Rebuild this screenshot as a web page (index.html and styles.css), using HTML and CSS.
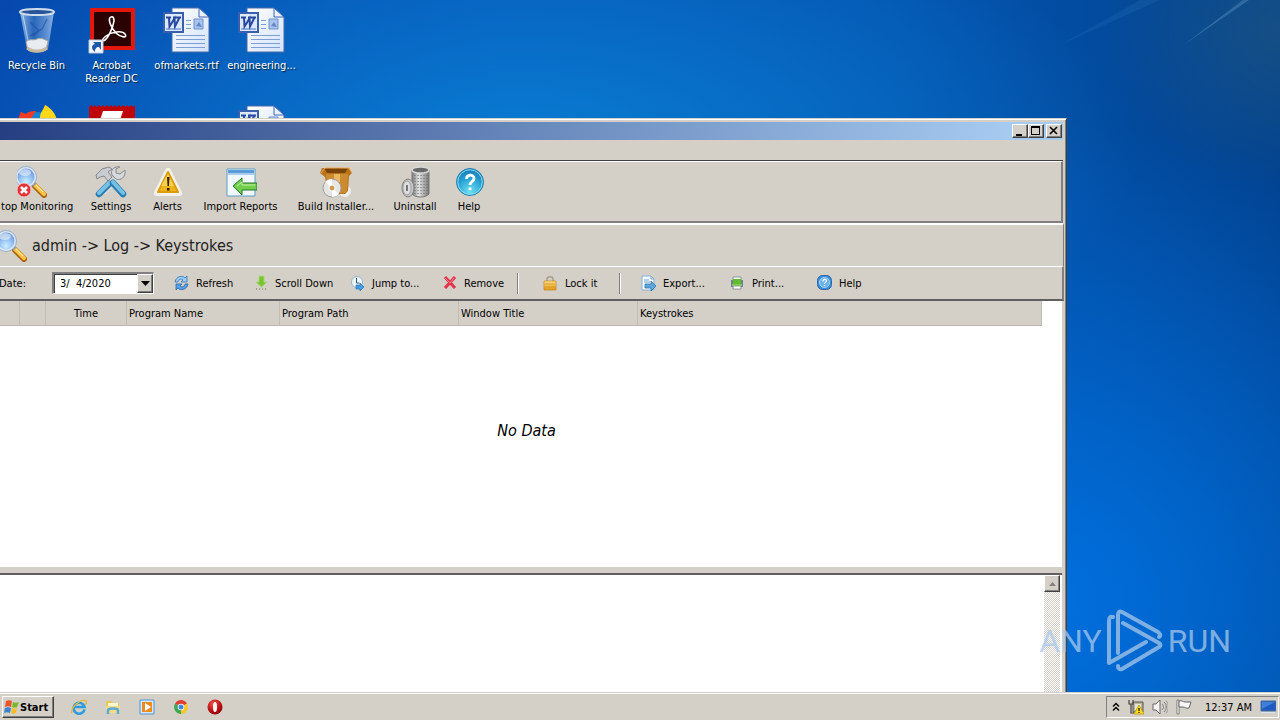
FILE: index.html
```html
<!DOCTYPE html>
<html lang="en">
<head>
<meta charset="utf-8">
<title>Desktop</title>
<link rel="stylesheet" href="styles.css">
</head>
<body>
<svg class="defs" aria-hidden="true">
  <defs>
    <linearGradient id="paper" x1="0" y1="0" x2="1" y2="1"><stop offset="0" stop-color="#fff"/><stop offset="1" stop-color="#d3e2fa"/></linearGradient>
    <linearGradient id="gold" x1="0" y1="0" x2="0" y2="1"><stop offset="0" stop-color="#ffe08a"/><stop offset="1" stop-color="#e29a12"/></linearGradient>
    <radialGradient id="lens" cx=".5" cy=".75" r=".8"><stop offset="0" stop-color="#c9f1ff"/><stop offset=".5" stop-color="#8db9ef"/><stop offset="1" stop-color="#5a86d0"/></radialGradient>
    <radialGradient id="aqua" cx=".5" cy=".85" r=".85"><stop offset="0" stop-color="#6fe0f6"/><stop offset=".6" stop-color="#259fd2"/><stop offset="1" stop-color="#1878b4"/></radialGradient>
    <linearGradient id="steel" x1="0" y1="0" x2="1" y2="0"><stop offset="0" stop-color="#777"/><stop offset=".4" stop-color="#e4e4e4"/><stop offset="1" stop-color="#777"/></linearGradient>
    <linearGradient id="glass" x1="0" y1="0" x2="1" y2="0"><stop offset="0" stop-color="#b9d4ef" stop-opacity=".8"/><stop offset=".4" stop-color="#4e83c4" stop-opacity=".5"/><stop offset="1" stop-color="#a9c8ec" stop-opacity=".8"/></linearGradient>
    <radialGradient id="opera" cx=".4" cy=".3" r=".8"><stop offset="0" stop-color="#f4554d"/><stop offset=".6" stop-color="#b80f12"/><stop offset="1" stop-color="#7d0507"/></radialGradient>
    <symbol id="word" viewBox="0 0 48 48">
      <path d="M9 2h27l10 9v35H9z" fill="url(#paper)" stroke="#4a6aa8"/>
      <path d="M36 2l10 9H36z" fill="#eaf2ff" stroke="#3c66b4"/>
      <path d="M13 29.500h29M13 33.500h29M13 37.500h29M13 41.500h29M23 14.500h5M23 18.500h5M23 22.500h5" stroke="#7f9fd4"/>
      <path d="M31 13h9v10h-9z" fill="#a8c3ee" stroke="#6f93cc"/>
      <path d="M33 20l3-4 3 5z" fill="#6387c4"/>
      <path d="M1 7h19v19H1z" fill="#dce8fb" stroke="#3a5fae" stroke-width="2"/>
      <path d="M3 23h15" stroke="#93afe0" stroke-width="2"/>
      <path d="M3 11.500h5M10 11.500h8M6 12l.5 8.500 5-8 .5 8 4.500-9" fill="none" stroke="#2648a0" stroke-width="2"/>
    </symbol>
    <symbol id="magnifier" viewBox="0 0 32 32">
      <path d="M20 20l9 9" stroke="#a8600a" stroke-width="6" stroke-linecap="round"/>
      <path d="M20 19l9 9" stroke="#ffc445" stroke-width="4" stroke-linecap="round"/>
      <path d="M21 19l7 7" stroke="#fff0b8" stroke-width="1"/>
      <path d="M17 16l3 3" stroke="#999" stroke-width="4"/>
      <circle cx="11" cy="11" r="9.5" fill="url(#lens)" stroke="#dbe7f7" stroke-width="2"/>
      <circle cx="11" cy="11" r="10.5" fill="none" stroke="#7e9cc4" stroke-width=".7"/>
      <ellipse cx="10" cy="6.5" rx="6" ry="3.5" fill="#fff" opacity=".5"/>
    </symbol>
  </defs>
</svg>

<div class="screen">
<main class="desktop">
  <svg class="rays" viewBox="0 0 1280 692" preserveAspectRatio="none" aria-hidden="true">
    <path d="M1160 0L1060 45 1140 0z" fill="#5aa4e0" opacity=".1"/>
    <path d="M1249 0L1182 46 1243 0z" fill="#8fc0ea" opacity=".25"/>
  </svg>
  <ul class="icons">
    <li><svg viewBox="0 0 48 48"><path d="M7 6l7 37c3 4 17 4 21 0l6-37z" fill="url(#glass)"/><ellipse cx="24" cy="6" rx="17" ry="3" fill="#28549b" stroke="#cfdce9" stroke-width="2"/><path d="M13 36c4-4 7-1 11-3s8 1 11 2l-2 9c-5 3-14 3-18 0z" fill="#e9edf2" stroke="#a9a59c"/><path d="M14 42c6 4 14 4 20 0" stroke="#c7b9a2" stroke-width="3" fill="none"/><path d="M17 16l9 9-6 5M34 13l-5 10-12 7" stroke="#1e4fa5" stroke-width="1.500" fill="none" opacity=".6"/><path d="M10 9l6 31" stroke="#dcecff" opacity=".7"/></svg><span>Recycle Bin</span></li>
    <li><svg viewBox="0 0 48 48"><path d="M2 2h45v42H2z" fill="#e3170a"/><path d="M6 6h37v34H6z" fill="#2b0204"/><path d="M23 11c-4 1 0 11 5 16s12 5 9 1-14-2-19 2-4 6-1 4 8-12 9-19c0-3-1-5-3-4z" fill="none" stroke="#fff" stroke-width="1.600"/><path d="M1 34h14v13H1z" fill="#f4f7fb" stroke="#bcc7d6"/><path d="M7 46c-4-3-4-7 0-8l-2-2h8v8l-2-3c-3 0-4 2-4 5z" fill="#1c5aa8"/></svg><span>Acrobat Reader DC</span></li>
    <li><svg><use href="#word"/></svg><span>ofmarkets.rtf</span></li>
    <li><svg><use href="#word"/></svg><span>engineering...</span></li>
    <li><svg viewBox="0 0 48 48"><circle cx="24" cy="26" r="18" fill="#1483d8"/><path d="M6 26c-2-8 0-15 2-18l5 2c3-3 7-3 10-3l-8 12z" fill="#ef3b23"/><path d="M27 14c0-6 3-7 5-13 6 3 12 10 12 17H28z" fill="#ffd81b"/></svg></li>
    <li><svg viewBox="0 0 48 48"><path d="M1 3l2-2 2 2 2-2 2 2 2-2 2 2 2-2 2 2 2-2 2 2 2-2 2 2 2-2 2 2 2-2 2 2 2-2 2 2 2-2 2 2 2-2 2 2 2-2v46H1z" fill="#c00509"/><path d="M15 7h20l-3 9H12z" fill="#fff"/></svg></li>
    <li></li>
    <li><svg><use href="#word"/></svg></li>
  </ul>

  <section class="window">
    <header class="titlebar">
      <button class="cap" aria-label="Minimize"><svg viewBox="0 0 14 12"><path d="M3 9h6v2H3z"/></svg></button>
      <button class="cap" aria-label="Maximize"><svg viewBox="0 0 14 12"><path d="M2 1h9v9H2zM3 3v6h7V3z" fill-rule="evenodd"/></svg></button>
      <button class="cap cap-close" aria-label="Close"><svg viewBox="0 0 14 12"><path d="M3 2l7 7M10 2L3 9" stroke="#000" stroke-width="1.600"/></svg></button>
    </header>
    <div class="menubar"></div>

    <nav class="toolbar">
      <button><svg viewBox="0 0 32 32"><g transform="translate(-2 0)"><use href="#magnifier" width="32" height="32"/><circle cx="9" cy="24" r="7" fill="#e23437" stroke="#f5c5c5"/><path d="M6 21l6 6M12 21l-6 6" stroke="#fff" stroke-width="2.600"/></g></svg><span>top Monitoring</span></button>
      <button><svg viewBox="0 0 32 32"><path d="M24 12L9 27" stroke="#d9d9d9" stroke-width="5"/><path d="M30 4l-5 4-4-1 0-4 4-2c-6-1-10 3-8 8l4 4c5 2 10-2 9-9z" fill="#d7dadd" stroke="#85888c"/><path d="M2 13l-1-4 6-6 7-2 3 2-4 3 4 5-4 4-4-5-4 1z" fill="#c9ccd0" stroke="#85888c"/><path d="M14 18L4 28" stroke="#287cae" stroke-width="6.500" stroke-linecap="round"/><path d="M14 17L4 27" stroke="#77c0e8" stroke-width="4" stroke-linecap="round"/><path d="M18 17l10 11" stroke="#287cae" stroke-width="6.500" stroke-linecap="round"/><path d="M18 16l10 11" stroke="#77c0e8" stroke-width="4" stroke-linecap="round"/></svg><span>Settings</span></button>
      <button><svg viewBox="0 0 32 32"><path d="M16 5l11 22H5z" fill="#f5f2ea" stroke="#f5f2ea" stroke-width="6" stroke-linejoin="round"/><path d="M16 6l10 20H6z" fill="#f0b41c" stroke="#dc9b0c" stroke-width="2" stroke-linejoin="round"/><path d="M16 8l6 12H9z" fill="#fbd24e"/><path d="M15 11h2.500l-.5 9h-1.500zM15 22h2.500v2.500H15z" fill="#332400"/></svg><span>Alerts</span></button>
      <button><svg viewBox="0 0 32 32"><path d="M2 3h28v27H2z" fill="#f0f8fc" stroke="#5f9dc6"/><path d="M3 4h26v5H3z" fill="#5b9bd8"/><path d="M3 7h26v2H3z" fill="#a9cdf0"/><path d="M8 20l9-8v5h15v7H17v5z" fill="#72cf4c" stroke="#23762e"/><path d="M12 20l5-4v3h13" fill="none" stroke="#c6f0a8"/></svg><span>Import Reports</span></button>
      <button><svg viewBox="0 0 32 32"><circle cx="25" cy="25" r="6" fill="#eee"/><path d="M2 2h27l3 5-3 3-1 15-3 3H8L5 11 0 7z" fill="#b8731c"/><path d="M4 2h24l-3 5H7z" fill="#7b4309"/><path d="M6 8h22l-1 17-2 2H8z" fill="#cd8b30"/><path d="M14 8h6v8h-6z" fill="#e9b661"/><path d="M1 7l4-5h24l3 5" fill="none" stroke="#edae4f"/><circle cx="12" cy="22" r="9" fill="#e5e5e5" stroke="#9d9d9d"/><path d="M12 22L5 16a9 9 0 0 1 7-3zM12 22l7 6a9 9 0 0 1-7 3z" fill="#fff"/><circle cx="12" cy="22" r="3" fill="#cb9b58" stroke="#fff"/></svg><span>Build Installer...</span></button>
      <button><svg viewBox="0 0 32 32"><path d="M13 4v24c3 4 14 4 17 0V4z" fill="url(#steel)" stroke="#777"/><path d="M16 9v19M19 9v20M22 9v20M25 9v20M28 9v19" stroke="#666" stroke-dasharray="1 2"/><ellipse cx="21.500" cy="4" rx="8.500" ry="3" fill="#686868" stroke="#d6d6d6" stroke-width="1.500"/><ellipse cx="9" cy="22" rx="6" ry="9" fill="#c5c5c5" stroke="#808080"/><ellipse cx="8" cy="22" rx="4" ry="7" fill="#dedede" stroke="#a0a0a0"/><path d="M8 19v6" stroke="#777" stroke-width="2"/></svg><span>Uninstall</span></button>
      <button><svg viewBox="0 0 32 32"><circle cx="17" cy="16" r="13.500" fill="url(#aqua)" stroke="#2380b0"/><circle cx="17" cy="16" r="12.300" fill="none" stroke="#8edcf2"/><path d="M13.500 13c0-5 7.500-5 7.500-.5 0 3-4 3-4 6.500M17 21.500V24" fill="none" stroke="#fff" stroke-width="2.800"/></svg><span>Help</span></button>
    </nav>

    <div class="crumb"><svg><use href="#magnifier"/></svg><h1>admin -&gt; Log -&gt; Keystrokes</h1></div>

    <div class="actions">
      <label for="date">Date:</label>
      <div class="picker"><input id="date" type="text" value="3/&nbsp; 4/2020"><button aria-label="Open calendar"><svg viewBox="0 0 9 5"><path d="M0 0h9L4.500 5z"/></svg></button></div>
      <button><svg viewBox="0 0 16 16"><path d="M1 7c1-6 8-7 10-4l2-2v6H7l2-2C7 3 4 5 4 7z" fill="#9ccbf3" stroke="#2d73b8" stroke-width=".8"/><path d="M14 9c-1 6-8 7-10 4l-2 2V9h6l-2 2c2 2 5 0 5-2z" fill="#5ba0e4" stroke="#2566ac" stroke-width=".8"/></svg>Refresh</button>
      <button><svg viewBox="0 0 16 16"><path d="M6 1h5v6h3l-5.500 5L3 7h3z" fill="#78c62d" stroke="#a8d67a"/><path d="M3 14h11" stroke="#5a7040" stroke-dasharray="1 2"/></svg>Scroll Down</button>
      <button><svg viewBox="0 0 16 16"><circle cx="7" cy="7" r="5.500" fill="#edf6fb" stroke="#9ab6ca"/><path d="M6.500 3v5h3" fill="none" stroke="#31576d"/><path d="M6 10h4V8l4 4-4 4v-2H6z" fill="#459ce2" stroke="#1d6bae" stroke-width=".6"/></svg>Jump to...</button>
      <button><svg viewBox="0 0 16 16"><path d="M3 2l10 11M13 2L3 13" stroke="#e5354a" stroke-width="3.200"/><path d="M3 3l5 5 4-5" fill="none" stroke="#f9808d"/></svg>Remove</button>
      <i class="sep"></i>
      <button><svg viewBox="0 0 16 16"><path d="M4 7V4c0-3 6-3 6 0v3" fill="none" stroke="#a9a08c" stroke-width="1.500"/><path d="M1 6h12v9H1z" fill="url(#gold)" stroke="#c4841a" stroke-width=".7"/><path d="M2 9h10M2 12h10" stroke="#c78516" stroke-width=".6"/></svg>Lock it</button>
      <i class="sep"></i>
      <button><svg viewBox="0 0 16 16"><path d="M1 1h9l3 3v11H1z" fill="#f5faff" stroke="#85b1d6"/><path d="M10 1v3h3M3 5h5M3 7h6" fill="none" stroke="#74a5cf"/><path d="M4 9h6V6l5 5-5 5v-3H4z" fill="#5ba7df" stroke="#26699f" stroke-width=".7"/></svg>Export...</button>
      <button><svg viewBox="0 0 16 16"><path d="M3 2h8v4H3zM3 11h8v3H3z" fill="#fff" stroke="#74808c" stroke-width=".8"/><path d="M1 5h2v2h8V5h2v7h-2v-1H3v1H1z" fill="#6e8292"/><path d="M3 4h8v6H3z" fill="#63bc2f"/><path d="M2 10h10" stroke="#8bd558" stroke-width="1.500"/></svg>Print...</button>
      <button><svg viewBox="0 0 16 16"><rect x="0.500" y="0.500" width="14" height="14" rx="5" fill="#3d8fda" stroke="#2667a9"/><circle cx="7.500" cy="7.500" r="5" fill="#69b2ee" stroke="#a9d4f7"/><path d="M6 6.500c0-3 3.500-2.500 3.500-.5 0 1.500-2 1-2 3M7.500 10v1" fill="none" stroke="#fff" stroke-width="1.200"/></svg>Help</button>
    </div>

    <div class="list">
      <table>
        <colgroup><col class="c-a"><col class="c-b"><col class="c-time"><col class="c-name"><col class="c-path"><col class="c-path"><col></colgroup>
        <thead><tr><th></th><th></th><th class="mid">Time</th><th>Program Name</th><th>Program Path</th><th>Window Title</th><th>Keystrokes</th></tr></thead>
      </table>
      <p class="empty">No Data</p>
    </div>
    <div class="splitter"></div>
    <div class="memo">
      <div class="scrollbar"><button aria-label="Scroll up"><svg viewBox="0 0 7 4"><path d="M0 4h7L3.500 0z" fill="#808080"/></svg></button></div>
    </div>
  </section>

  <div class="brand"><span>ANY</span>
    <svg viewBox="0 0 56 64" fill="none" stroke="currentColor" stroke-width="4" stroke-linecap="round" stroke-linejoin="round"><path d="M6 8Q2 7 2 12v42l37-21"/><path d="M11 44V6q0-5 4-3l36 20q4 3 1 5M16 14l36 20q3 2 0 4L15 60q-4 1-4-3"/></svg>
    <span>RUN</span></div>
</main>

<footer class="taskbar">
  <button class="start"><svg viewBox="0 0 17 16"><path d="M3 2c2-1 4-1 6 0L8 8C6 7 4 7 2 8z" fill="#e9542a"/><path d="M10 3c2 1 4 1 6 0l-2 5c-2 1-3 1-5 0z" fill="#79b82a"/><path d="M2 9c2-1 4-1 6 0l-1 5c-2-1-4-1-6 0z" fill="#3a83d0"/><path d="M9 9c2 1 3 1 5 0l-1 5c-2 1-4 1-5 0z" fill="#f6bd26"/></svg>Start</button>
  <div class="quick">
    <button aria-label="Internet Explorer"><svg viewBox="0 0 16 16"><path d="M13.500 10.500A5.500 5.500 0 1 1 13.500 8H4" fill="none" stroke="#2b9be3" stroke-width="2.600"/><path d="M1 14C-1 9 10-1 15 2c1 1 0 3-1 4" fill="none" stroke="#e9b62c" stroke-width="1.300"/></svg></button>
    <button aria-label="Explorer"><svg viewBox="0 0 16 16"><path d="M1 2h6l1 2h6v10H1z" fill="#e8c65e"/><path d="M3 4h10v5H3z" fill="#fff7cf"/><path d="M1 7h14v7H1z" fill="#f6dd83"/><path d="M3 15v-4c0-2 10-2 10 0v4" fill="none" stroke="#55a9dc" stroke-width="2.500"/></svg></button>
    <button aria-label="Media Player"><svg viewBox="0 0 16 16"><path d="M1 1h14v14H1z" fill="#d5e8fa" stroke="#4c95d8"/><path d="M3 3h10v10H3z" fill="#f08a1d"/><path d="M6 4l6 4-6 4z" fill="#fff"/></svg></button>
    <button aria-label="Chrome"><svg viewBox="0 0 16 16"><path d="M8 8L2 4.500A7 7 0 0 1 14 4.500z" fill="#e23d30"/><path d="M8 8l6-3.500A7 7 0 0 1 8 15z" fill="#f9ca25"/><path d="M8 8v7A7 7 0 0 1 2 4.500z" fill="#3da850"/><circle cx="8" cy="8" r="3.300" fill="#fff"/><circle cx="8" cy="8" r="2.500" fill="#4385e8"/></svg></button>
    <button aria-label="Opera"><svg viewBox="0 0 16 16"><circle cx="8" cy="8" r="7.500" fill="url(#opera)"/><ellipse cx="8" cy="8" rx="2" ry="5" fill="#fff"/></svg></button>
  </div>
  <div class="tray">
    <svg class="chev" viewBox="0 0 8 10"><path d="M1 4.500L4 1.500l3 3M1 8.500l3-3 3 3" fill="none" stroke="#000" stroke-width="1.400"/></svg>
    <svg viewBox="0 0 16 16"><path d="M5 3h10v10H5z" fill="#b9b59c" stroke="#555"/><path d="M7 5h6v6H7z" fill="#e4e2d4"/><path d="M1 1v4h4V1M3 5v9h3" fill="none" stroke="#444" stroke-width="1.200"/><path d="M11 6l5 9H6z" fill="#ffd91c" stroke="#b89400" stroke-width=".7"/><path d="M11 9v3M11 13v1" stroke="#222" stroke-width="1.300"/></svg>
    <svg viewBox="0 0 16 16"><path d="M1 5h3l4-4v14l-4-4H1z" fill="#f5f5f5" stroke="#666"/><path d="M10 5c2 2 2 4 0 6M12 3c3 3 3 7 0 10" fill="none" stroke="#777"/><path d="M14 1.500c3 4 3 9 0 13" fill="none" stroke="#999"/></svg>
    <svg viewBox="0 0 16 16"><path d="M1 1v14h2V1z" fill="#fff" stroke="#666" stroke-width=".8"/><path d="M3 2c3-1 4 1 6 1h6l-2 6c-3 1-4-1-6-1H3z" fill="#f8f8f8" stroke="#666"/></svg>
    <time>12:37 AM</time>
    <svg viewBox="0 0 16 16"><path d="M1 2h15v10H1z" fill="#1f5ac0" stroke="#4d6f9b"/><path d="M2 3h13L2 10z" fill="#3f7fd8"/><path d="M1 13h14v1H1z" fill="#dbe6f2"/></svg>
  </div>
</footer>
</div>
</body>
</html>
```

FILE: styles.css
```css
* { box-sizing: border-box; }
body {
  margin: 0;
  font: 11px/13px "DejaVu Sans Condensed", "DejaVu Sans", sans-serif;
  color: #000;
}
button {
  font: inherit;
  color: inherit;
  padding: 0;
  border: 0;
  background: none;
  white-space: nowrap;
}
.defs { position: absolute; width: 0; height: 0; }

.screen { display: flex; flex-direction: column; height: 100vh; overflow: hidden; }

/* Desktop */
.desktop {
  flex: 1;
  min-height: 0;
  position: relative;
  overflow: hidden;
  background:
    radial-gradient(ellipse 180px 160px at 1280px 30px, rgba(30, 84, 128, .7), rgba(10, 70, 130, 0)),
    radial-gradient(ellipse 560px 480px at 1040px 600px, rgba(0, 114, 226, .95), rgba(0, 104, 216, 0)),
    radial-gradient(ellipse 620px 260px at 520px 150px, rgba(10, 126, 212, .95), rgba(6, 96, 196, 0)),
    linear-gradient(90deg, #0648ae 0%, #0558b8 40%, #0355b0 70%, #014290 100%);
}
.rays { position: absolute; inset: 0; width: 100%; height: 100%; }
.icons {
  position: relative;
  list-style: none;
  margin: 0 0 0 -1px;
  padding: 6px 0 0;
  display: grid;
  grid-template-columns: repeat(4, 75px);
  grid-auto-rows: 98px;
  width: max-content;
  color: #fff;
  text-shadow: 1px 1px 1px #023;
}
.icons li { display: flex; flex-direction: column; align-items: center; gap: 5px; text-align: center; }
.icons svg { width: 48px; height: 48px; }
.icons span { max-width: 70px; }

/* Window */
.window {
  position: absolute;
  top: 118px;
  right: 213px;
  bottom: 0;
  left: -16px;
  display: flex;
  flex-direction: column;
  padding: 3px 2px 0 2px;
  background: #d4d0c8;
  border: 1px solid #d4d0c8;
  border-right-color: #404040;
  border-bottom: 0;
  box-shadow: inset 1px 1px #fff, inset -1px 0 #808080;
}
.titlebar {
  display: flex;
  justify-content: flex-end;
  align-items: center;
  height: 18px;
  padding: 0 1px 0 0;
  margin-right: 1px;
  background: linear-gradient(90deg, #233d80, #a6caf0 95%);
}
.cap {
  width: 16px;
  height: 14px;
  background: #d4d0c8;
  border: 1px solid #fff;
  border-right-color: #404040;
  border-bottom-color: #404040;
  box-shadow: inset -1px -1px #808080;
  display: flex;
}
.cap svg { width: 14px; height: 12px; }
.cap-close { margin-left: 2px; }
.menubar { height: 21px; margin-right: 1px; border-bottom: 1px solid #404040; }

.toolbar {
  display: grid;
  grid-template-columns: 92px 62px 51px 95px 96px 62px 46px;
  margin-right: 1px;
  padding: 4px 0 8px 1px;
  border-top: 1px solid #fff;
  border-right: 2px solid #808080;
  border-bottom: 2px solid #808080;
}
.toolbar button { display: flex; flex-direction: column; align-items: center; gap: 2px; }
.toolbar button:first-child { align-items: flex-start; padding-left: 13px; }
.toolbar button:first-child svg { margin-left: 16px; }
.toolbar svg { width: 32px; height: 32px; }

.crumb {
  display: flex;
  align-items: center;
  gap: 5px;
  height: 43px;
  padding: 0 0 0 8px;
  border-top: 2px solid #fff;
  border-right: 1px solid #808080;
}
.crumb svg { width: 32px; height: 32px; }
.crumb h1 { margin: 0; font-size: 16px; line-height: 20px; font-weight: 400; color: #222; }

.actions {
  display: grid;
  grid-template-columns: 65px 122px 79px 97px 92px 75px 26px 76px 22px 89px 87px 60px;
  align-items: center;
  height: 35px;
  border-top: 1px solid #fff;
  border-right: 2px solid #808080;
  border-bottom: 2px solid #606060;
}
.actions label { padding-left: 12px; }
.actions > button { display: flex; align-items: center; gap: 6px; }
.actions > button svg { width: 16px; height: 16px; }
.sep { width: 2px; height: 21px; border-left: 1px solid #808080; border-right: 1px solid #fff; }
.picker {
  display: flex;
  width: 102px;
  height: 22px;
  background: #fff;
  border: 2px solid #808080;
  border-right: 1px solid #fff;
  border-bottom: 1px solid #fff;
  box-shadow: inset 1px 1px #404040;
}
.picker input { flex: 1; min-width: 0; border: 0; background: none; padding: 0 0 0 6px; font: inherit; }
.picker button, .scrollbar button {
  display: flex;
  align-items: center;
  justify-content: center;
  width: 16px;
  background: #d4d0c8;
  border: 1px solid #fff;
  border-right-color: #404040;
  border-bottom-color: #404040;
  box-shadow: inset -1px -1px #808080;
}
.picker button svg { width: 9px; height: 5px; }

/* Log list */
.list {
  flex: 1;
  min-height: 0;
  display: flex;
  flex-direction: column;
  margin-right: 1px;
  padding-right: 20px;
  background: #fff;
  border-right: 1px solid #d4d0c8;
}
table { width: 100%; table-layout: fixed; border-collapse: separate; border-spacing: 0; background: #d4d0c8; }
th {
  height: 25px;
  padding: 0 2px;
  font-weight: 400;
  text-align: left;
  border-right: 1px solid #c2beb6;
  border-bottom: 1px solid #b8b4ac;
}
.mid { text-align: center; }
.c-a { width: 33px; }
.c-b { width: 26px; }
.c-time { width: 81px; }
.c-name { width: 153px; }
.c-path { width: 179px; }
.empty {
  margin: 95px 0 0 24px;
  text-align: center;
  font-size: 16px;
  line-height: 20px;
  font-style: italic;
}
.splitter { height: 9px; margin-right: 2px; background: #d4d0c8; border-bottom: 2px solid #606060; box-shadow: inset 0 1px #fff; }
.memo { display: flex; justify-content: flex-end; height: 117px; margin-right: 2px; padding-right: 2px; background: #fff; }
.scrollbar { width: 16px; background: repeating-conic-gradient(#fff 0 25%, #d4d0c8 0 50%) 0 0 / 2px 2px; }
.scrollbar button { height: 17px; }
.scrollbar svg { width: 7px; height: 4px; }

.brand {
  position: absolute;
  right: 49px;
  bottom: 19px;
  display: flex;
  align-items: center;
  gap: 5px;
  color: #a8c8ea;
  opacity: .75;
  font: 400 32px/64px Roboto, "Liberation Sans", sans-serif;
}
.brand svg { width: 56px; height: 64px; }

/* Taskbar */
.taskbar {
  display: flex;
  align-items: center;
  height: 28px;
  padding: 1px 1px 0 2px;
  background: #d4d0c8;
  border-top: 1px solid #d4d0c8;
  box-shadow: inset 0 1px #fff;
}
.start {
  display: flex;
  align-items: center;
  width: 52px;
  height: 22px;
  font-weight: 700;
  border: 1px solid #fff;
  border-right-color: #404040;
  border-bottom-color: #404040;
  box-shadow: inset -1px -1px #808080;
}
.start svg { width: 17px; height: 16px; }
.quick { display: flex; gap: 18px; padding-left: 17px; }
.quick svg { display: block; width: 16px; height: 16px; }
.tray {
  margin-left: auto;
  display: flex;
  align-items: center;
  gap: 8px;
  height: 22px;
  padding: 0 2px 0 5px;
  border: 1px solid #808080;
  border-right-color: #fff;
  border-bottom-color: #fff;
}
.tray svg { width: 16px; height: 16px; }
.tray .chev { width: 8px; height: 10px; }
.tray time { padding-left: 5px; }
```
